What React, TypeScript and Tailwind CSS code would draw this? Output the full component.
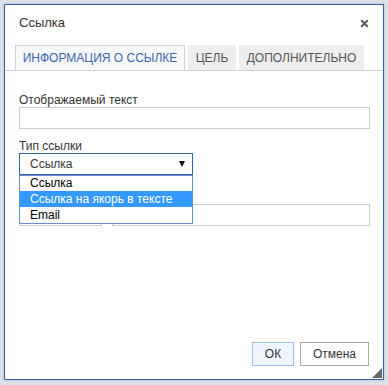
import React from 'react';
import { X } from 'lucide-react';

const tabs = [
  { id: 'info', label: 'ИНФОРМАЦИЯ О ССЫЛКЕ', width: 'w-[170px]', active: true },
  { id: 'target', label: 'ЦЕЛЬ', width: 'w-[48px]', active: false },
  { id: 'advanced', label: 'ДОПОЛНИТЕЛЬНО', width: 'w-[125px]', active: false },
];

const options = ['Ссылка', 'Ссылка на якорь в тексте', 'Email'];

export default function App() {
  return (
    <div
      className="w-[388px] h-[385px] bg-[#dde1e8] pt-[4px] pl-[4px] pr-[4px] pb-[5px] overflow-hidden"
      style={{ fontFamily: '"Liberation Sans", Arial, sans-serif' }}
    >
      <div className="relative h-full flex flex-col bg-white border border-[#3561b0] shadow-[0_0_3px_rgba(60,80,120,0.25)]">
        {/* Header */}
        <div className="h-[36px] flex items-center justify-between pl-[14px] pr-[13px]">
          <span className="text-[13px] text-[#333]">Ссылка</span>
          <X className="w-[11px] h-[11px] text-[#555]" strokeWidth={4} />
        </div>

        {/* Tabs */}
        <div className="mt-[4px] flex gap-[3px] pl-[10px] border-b border-[#cfcfcf]">
          {tabs.map((t) => (
            <div
              key={t.id}
              className={`${t.width} h-[25px] flex items-center justify-center text-[12px] ${
                t.active
                  ? 'bg-[#f7f8f9] border-t border-l border-r border-[#d2d2d2] text-[#3a66ad]'
                  : 'bg-[#eeeeee] text-[#555]'
              }`}
            >
              {t.label}
            </div>
          ))}
        </div>

        {/* Form */}
        <div className="pt-[22px] pl-[14px] pr-[13px] text-[12px] text-[#333]">
          <div className="h-[14px] leading-[14px]">Отображаемый текст</div>
          <div className="h-[22px] border border-[#c5ccd5] bg-white" />

          <div className="mt-[10px] h-[14px] leading-[14px]">Тип ссылки</div>
          <div className="relative w-[174px]">
            <div className="h-[22px] border border-[#3561b0] bg-white flex items-center justify-between pl-[10px] pr-[7px]">
              <span>Ссылка</span>
              <span className="w-0 h-0 border-l-[3.5px] border-r-[3.5px] border-t-[6px] border-l-transparent border-r-transparent border-t-[#111]" />
            </div>

            {/* Dropdown list */}
            <div className="absolute left-0 top-[22px] w-[174px] z-10 bg-white border border-[#6d8fca] text-black">
              {options.map((o, i) => (
                <div
                  key={o}
                  className={`${i === 0 ? 'h-[15px]' : 'h-[16px]'} flex items-center pl-[10px] leading-[15px] ${
                    i === 1 ? 'bg-[#3399ff] text-white' : ''
                  }`}
                >
                  {o}
                </div>
              ))}
            </div>
          </div>

          <div className="mt-[29px] flex gap-[10px]">
            <div className="w-[83px] h-[22px] border border-[#c5ccd5]" />
            <div className="flex-1 h-[22px] border border-[#c5ccd5]" />
          </div>
        </div>

        <div className="flex-1" />

        {/* Footer */}
        <div className="flex justify-end gap-[6px] pr-[14px] pb-[13px]">
          <button className="w-[42px] h-[24px] bg-[#f0f6ff] border border-[#9cc1f0] text-[12px] text-[#333]">
            ОК
          </button>
          <button className="w-[69px] h-[24px] bg-white border border-[#a8a8a8] text-[12px] text-[#333]">
            Отмена
          </button>
        </div>

        {/* Resize grip */}
        <svg className="absolute right-[1px] bottom-[1px]" width="10" height="10" viewBox="0 0 10 10">
          <polygon points="10,0 10,10 0,10" fill="#666" />
        </svg>
      </div>
    </div>
  );
}
